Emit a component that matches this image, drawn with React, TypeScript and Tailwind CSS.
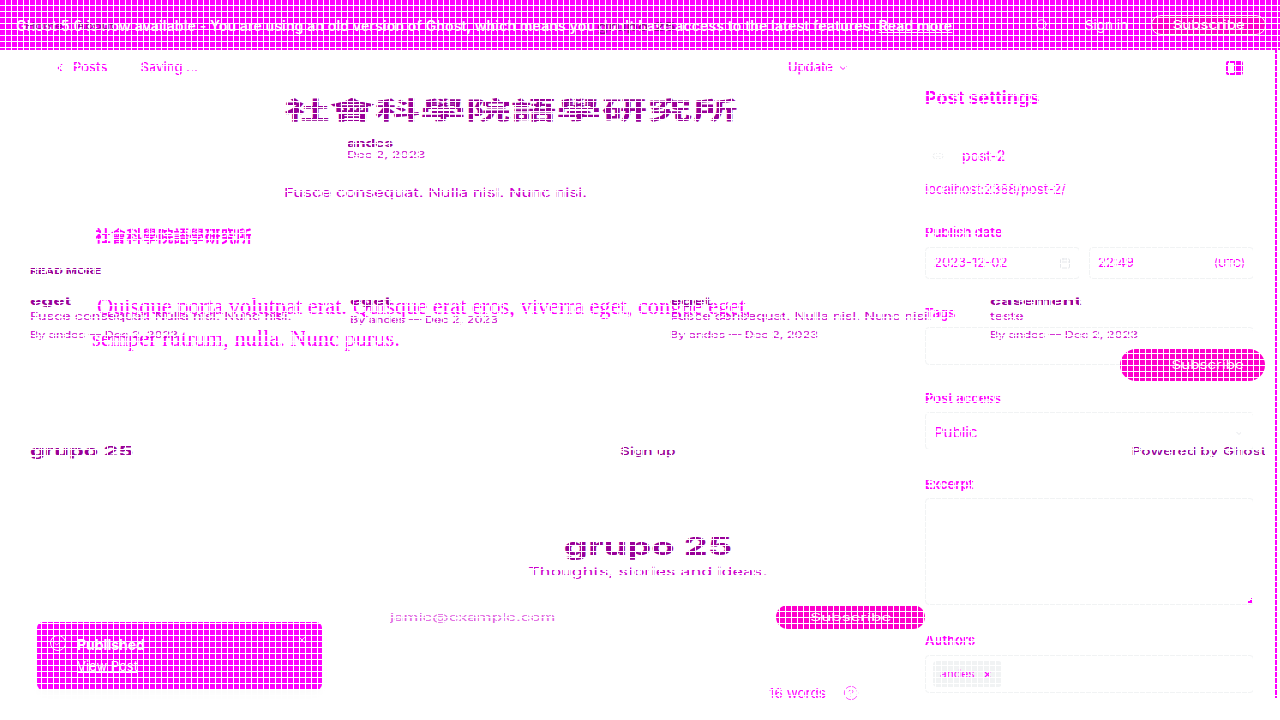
import { Calendar, Check, ChevronDown, ChevronLeft, HelpCircle, Link2, Search, X } from "lucide-react"

const cjk = "[font-family:'Noto_Sans_CJK_TC','Liberation_Sans',sans-serif]"
const description = "Fusce consequat. Nulla nisl. Nunc nisi."
const byline = "By andes — Dec 2, 2023"

function Label({ children, className = "" }: { children: string; className?: string }) {
  return <div className={`h-4 text-[13px] leading-4 font-semibold ${className}`}>{children}</div>
}

function Card({ title, desc }: { title: string; desc?: string }) {
  return (
    <div className="flex flex-col">
      <div className="h-3 origin-left scale-x-[1.72] text-[11px] leading-3 font-bold whitespace-nowrap text-[#990099]">{title}</div>
      {desc && (
        <div className="mt-[3px] h-3 origin-left scale-x-[1.44] text-[10px] leading-3 whitespace-nowrap text-[#cc00cc]">{desc}</div>
      )}
      <div className="mt-[7px] h-3 origin-left scale-x-[1.4] text-[9px] leading-3 whitespace-nowrap text-[#cc00cc]">{byline}</div>
    </div>
  )
}

function BlogPreview() {
  return (
    <div className="pointer-events-none absolute inset-x-0 top-0 flex flex-col [font-family:Inter,sans-serif]">
      <div className={`mt-[97px] h-6 w-[1022px] scale-x-[1.89] text-center text-[24px] leading-6 font-bold text-[#990099] ${cjk}`}>
        社會科學院語學研究所
      </div>
      <div className="mt-4 pl-[347px]">
        <div className="h-3 origin-left scale-x-[1.4] text-[11px] leading-3 font-bold text-[#990099]">andes</div>
        <div className="h-3 origin-left scale-x-[1.5] text-[9px] leading-3 text-[#cc00cc]">Dec 2, 2023</div>
      </div>
      <div className="mt-[26px] h-3 origin-left translate-x-[284px] scale-x-[1.39] text-[12px] leading-3 whitespace-nowrap text-[#cc00cc]">
        {description}
      </div>
      <div className="mt-[67px] h-[10px] origin-left translate-x-[30px] scale-x-[1.5] text-[8px] leading-[10px] font-bold text-[#990099]">
        READ MORE
      </div>
      <div className="mt-[19px] grid grid-cols-[320px_320px_320px_320px] pl-[30px]">
        <Card title="eget" desc={description} />
        <Card title="eget" />
        <Card title="eget" desc={description} />
        <Card title="casement" desc="teste" />
      </div>
      <div className="mt-2 mr-[15px] flex h-8 w-[145px] items-center justify-center self-end rounded-full bg-[#ff00cc] pl-[30px] text-[12px] text-white">
        <span className="scale-x-[1.26]">Subscribe</span>
      </div>
      <div className="mt-[64px] grid h-3 grid-cols-[590px_1fr_auto] pr-[14px] pl-[30px] text-[11px] leading-3 text-[#990099]">
        <span className="origin-left scale-x-[1.8] text-[13px] font-bold">grupo 25</span>
        <span className="origin-left scale-x-[1.4] font-medium">Sign up</span>
        <span className="origin-right scale-x-[1.4] font-medium">Powered by Ghost</span>
      </div>
      <div className="mt-[78px] h-6 w-[1296px] scale-x-[1.59] text-center text-[24px] leading-6 font-bold text-[#990099]">grupo 25</div>
      <div className="mt-[7px] h-3 w-[1296px] scale-x-[1.49] text-center text-[12px] leading-3 text-[#cc00cc]">
        Thoughts, stories and ideas.
      </div>
      <div className="mt-[27px] grid h-6 grid-cols-[386px_149px] items-center pl-[390px]">
        <span className="origin-left scale-x-[1.69] text-[10px] text-[#e060e0]">jamie@example.com</span>
        <span className="flex h-6 items-center justify-center rounded-full bg-[#ff00cc] text-[10px] text-white">
          <span className="scale-x-[1.7]">Subscribe</span>
        </span>
      </div>
    </div>
  )
}

function Banner() {
  return (
    <div className="relative flex h-[50px] items-center justify-between bg-[#ff00ff] pr-[14px] pl-4 text-white">
      <p className="text-[14px] font-semibold tracking-[0.15px] whitespace-nowrap">
        Ghost 5.0 is now available - You are using an old version of Ghost, which means you don't have access to the latest
        features. <span className="underline">Read more</span>
      </p>
      <div className="flex items-center">
        <Search className="h-[14px] w-[14px]" strokeWidth={1.5} />
        <span className="ml-[36px] text-[13.5px]">Sign in</span>
        <span className="ml-[23px] flex h-5 w-[115px] items-center justify-center rounded-full border border-white bg-[#ff00cc] text-[12px]">
          <span className="scale-x-[1.26]">Subscribe</span>
        </span>
      </div>
      <div className="pointer-events-none absolute top-[19px] left-[25px] flex gap-[26px] text-[9px] text-[#990099]">
        <span className="origin-left scale-x-[1.5]">Home</span>
        <span className="origin-left scale-x-[1.5]">About</span>
      </div>
      <div className="pointer-events-none absolute top-[18px] left-[597px] origin-left scale-x-[1.5] text-[12px] font-semibold text-[#990099]">
        grupo 25
      </div>
    </div>
  )
}

function Sidebar() {
  return (
    <aside className="w-[329px] shrink-0 text-[#ff00ff]">
      <div className="h-[52px] border-b border-[#f1f3f4] text-[18px] leading-6 font-bold">Post settings</div>
      <div className="flex h-9 items-center gap-[20px] border-b border-[#f1f3f4] pl-[7px] text-[14px]">
        <Link2 className="h-[12px] w-[12px] text-[#eceef0]" />
        <span className="-ml-[2px]">post-2</span>
      </div>
      <div className="mt-[7px] h-4 text-[13px] leading-4">localhost:2368/post-2/</div>
      <Label className="mt-[27px]">Publish date</Label>
      <div className="mt-[7px] flex h-8 gap-[9px] text-[13px]">
        <div className="flex w-[155px] items-center justify-between rounded-sm border border-[#f1f3f4] pr-[8px] pl-[8px]">
          <span>2023-12-02</span>
          <Calendar className="h-3 w-3 text-[#e5e7eb]" />
        </div>
        <div className="flex flex-1 items-center justify-between rounded-sm border border-[#f1f3f4] pr-[8px] pl-[8px]">
          <span>22:49</span>
          <span className="text-[11px]">(UTC)</span>
        </div>
      </div>
      <Label className="mt-[26px]">Tags</Label>
      <div className="mt-[6px] h-[38px] rounded-sm border border-[#f1f3f4]" />
      <Label className="mt-[25px]">Post access</Label>
      <div className="mt-[6px] flex h-[38px] items-center justify-between rounded-sm border border-[#f1f3f4] pt-[4px] pr-[8px] pl-[8px] text-[15px]">
        <span>Public</span>
        <ChevronDown className="h-3 w-3 text-[#e5e7eb]" />
      </div>
      <Label className="mt-[26px]">Excerpt</Label>
      <div className="mt-[6px] flex h-[107px] items-end justify-end rounded-sm border border-[#f1f3f4] p-[1px]">
        <div className="h-[5px] w-[5px] bg-[linear-gradient(135deg,transparent_50%,#ff00ff_50%)]" />
      </div>
      <Label className="mt-[27px]">Authors</Label>
      <div className="mt-[7px] flex h-[38px] items-center rounded-sm border border-[#f1f3f4] pl-[7px]">
        <div className="flex h-[26px] w-[69px] items-center gap-[8px] rounded-sm bg-[#f1f3f4] pl-[7px] text-[12px]">
          andes <X className="h-[9px] w-[9px]" strokeWidth={3} />
        </div>
      </div>
    </aside>
  )
}

export default function App() {
  return (
    <div className="relative h-[720px] w-[1280px] overflow-hidden bg-white [font-family:Inter,sans-serif]">
      <Banner />
      <div className="flex">
        <div className="w-[1275px] shrink-0">
          <header className="flex h-9 items-center pr-[32px] pl-[53px] text-[13px] font-medium text-[#ff00ff]">
            <ChevronLeft className="h-[14px] w-[14px]" />
            <span className="ml-[6px]">Posts</span>
            <span className="ml-[33px]">Saving ...</span>
            <span className="ml-[590px] flex items-center gap-1">
              Update <ChevronDown className="h-[12px] w-[12px]" />
            </span>
            <div className="ml-auto flex h-[14px] w-[17px] justify-end rounded-[2px] border-2 border-[#ff00ff]">
              <div className="h-full w-[7px] bg-[#ff00ff]" />
            </div>
          </header>
          <div className="flex">
            <main className="w-[925px] shrink-0 pt-[142px] pl-[92px]">
              <h2 className={`h-4 pl-[3px] text-[15.7px] leading-4 font-bold text-[#ff00ff] ${cjk}`}>社會科學院語學研究所</h2>
              <p className="mt-[47px] w-[665px] indent-[5px] text-[22.4px] leading-8 text-[#ff00ff] [font-family:'Liberation_Serif',serif]">
                Quisque porta volutpat erat. Quisque erat eros, viverra eget, congue eget, semper rutrum, nulla. Nunc purus.
              </p>
            </main>
            <Sidebar />
          </div>
        </div>
        <div className="h-[648px] w-[3px] bg-[#ff00ff]" />
      </div>

      <BlogPreview />

      <div className="absolute top-[622px] left-[37px] flex h-[68px] w-[285px] rounded-md bg-[#ff00ff] pt-[12px] pr-[15px] pl-[13px] text-white shadow-[0_4px_12px_rgba(0,0,0,0.02)]">
        <div className="mt-[1px] flex h-[16px] w-[16px] items-center justify-center rounded-full border border-white">
          <Check className="h-[10px] w-[10px]" />
        </div>
        <div className="ml-[11px] flex-1 text-[13px]">
          <div className="text-[14px] font-bold">Published</div>
          <div className="mt-[2px] underline">View Post</div>
        </div>
        <X className="mt-[1px] h-[10px] w-[10px]" />
      </div>

      <div className="absolute top-[683px] left-[769px] flex items-center gap-[17px] text-[13.5px] text-[#ff00ff]">
        <span>16 words</span>
        <HelpCircle className="h-4 w-4" strokeWidth={1} />
      </div>

      <div className="pointer-events-none absolute inset-0 bg-[linear-gradient(to_right,transparent_5px,white_5px),linear-gradient(to_bottom,transparent_5px,white_5px)] bg-[size:6px_6px]" />
    </div>
  )
}
